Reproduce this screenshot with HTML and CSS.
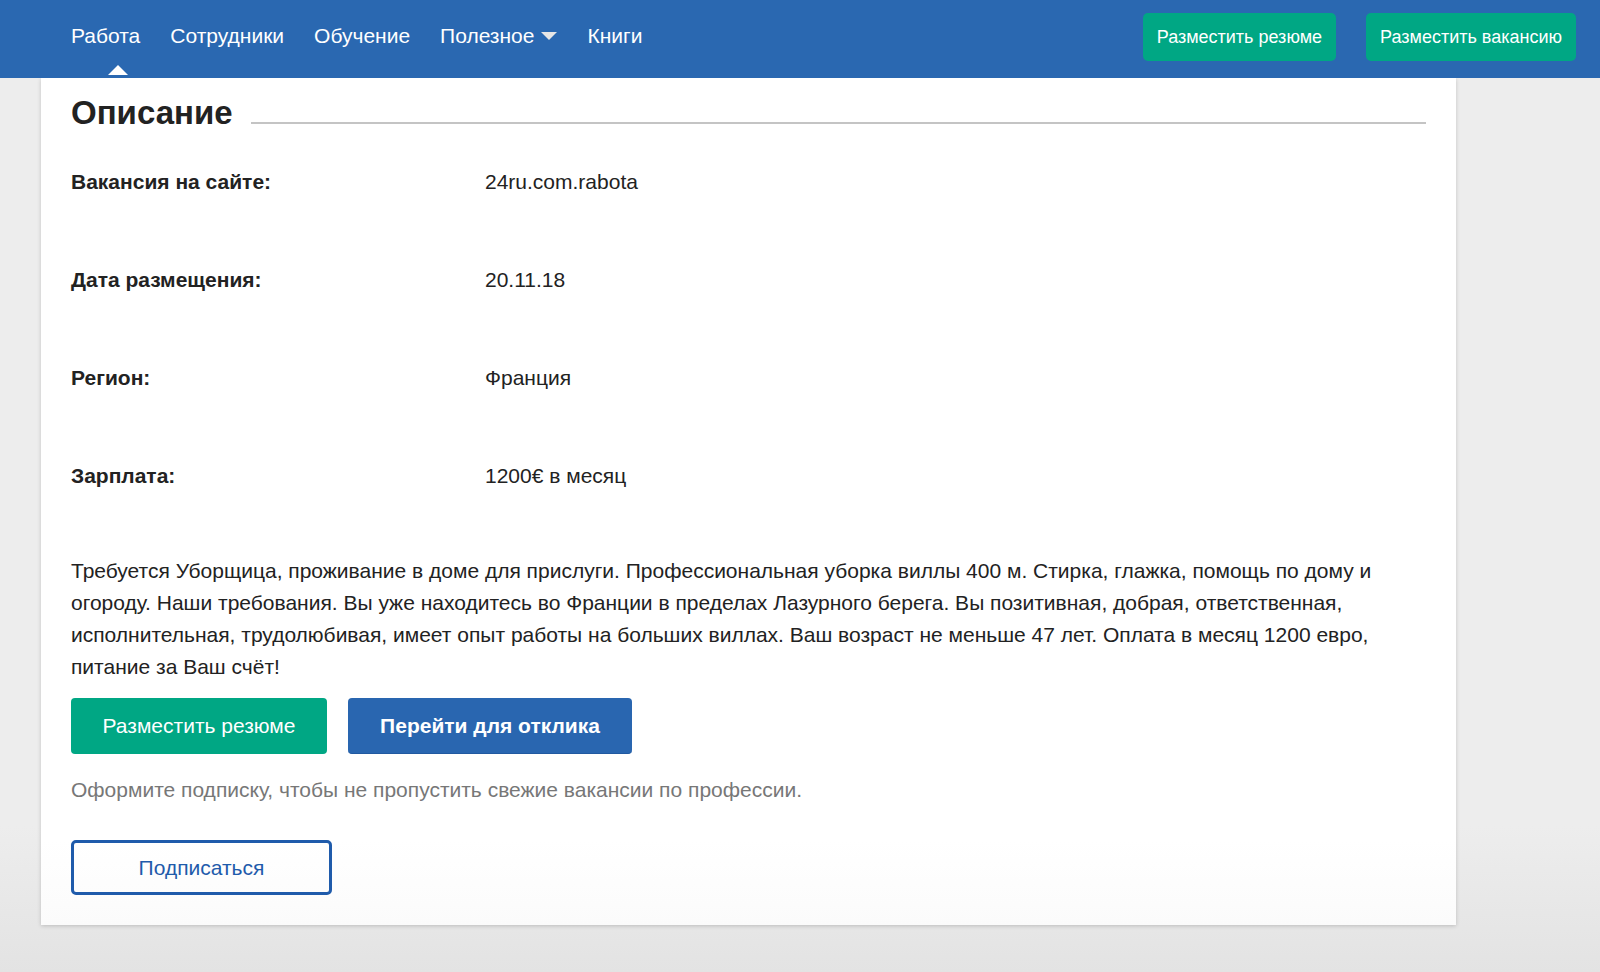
FILE: index.html
```html
<!DOCTYPE html>
<html lang="ru">
<head>
<meta charset="UTF-8">
<meta name="viewport" content="width=device-width, initial-scale=1.0">
<title>Описание вакансии</title>
<link rel="stylesheet" href="styles.css">
</head>
<body>
<header class="topbar">
    <nav class="menu">
        <a class="menu-item active" href="#">Работа</a>
        <a class="menu-item" href="#">Сотрудники</a>
        <a class="menu-item" href="#">Обучение</a>
        <a class="menu-item dropdown" href="#">Полезное <span class="caret"></span></a>
        <a class="menu-item" href="#">Книги</a>
    </nav>
    <div class="top-actions">
        <a class="btn-top" href="#">Разместить резюме</a>
        <a class="btn-top" href="#">Разместить вакансию</a>
    </div>
</header>

<div class="card">
    <div class="card-title">
        <h2>Описание</h2>
        <div class="title-line"></div>
    </div>

    <div class="info">
        <div class="info-label">Вакансия на сайте:</div>
        <div class="info-value">24ru.com.rabota</div>
        <div class="info-label">Дата размещения:</div>
        <div class="info-value">20.11.18</div>
        <div class="info-label">Регион:</div>
        <div class="info-value">Франция</div>
        <div class="info-label">Зарплата:</div>
        <div class="info-value">1200€ в месяц</div>
    </div>

    <p class="description">Требуется Уборщица, проживание в доме для прислуги. Профессиональная уборка виллы 400 м. Стирка, глажка, помощь по дому и огороду. Наши требования. Вы уже находитесь во Франции в пределах Лазурного берега. Вы позитивная, добрая, ответственная, исполнительная, трудолюбивая, имеет опыт работы на больших виллах. Ваш возраст не меньше 47 лет. Оплата в месяц 1200 евро, питание за Ваш счёт!</p>

    <div class="actions">
        <a class="btn btn-green" href="#">Разместить резюме</a>
        <a class="btn btn-blue" href="#">Перейти для отклика</a>
    </div>

    <p class="subscribe-note">Оформите подписку, чтобы не пропустить свежие вакансии по профессии.</p>

    <a class="btn btn-outline" href="#">Подписаться</a>
</div>
</body>
</html>
```

FILE: styles.css
```css
body {
    font-family: "Liberation Sans", Arial, sans-serif;
    margin: 0;
    padding: 0;
    min-height: 972px;
    background: linear-gradient(#ededed 85%, #e3e3e3);
    color: #222;
}

a {
    text-decoration: none;
}

.topbar {
    height: 78px;
    background-color: #2a68b1;
    display: flex;
    align-items: center;
    justify-content: space-between;
    padding: 0 24px 0 71px;
    position: relative;
    z-index: 2;
}

.menu {
    display: flex;
    align-items: center;
    gap: 30px;
    height: 100%;
    margin-top: -6px;
}

.menu-item {
    color: #fff;
    font-size: 21px;
    position: relative;
    display: flex;
    align-items: center;
}

.menu-item.active::after {
    content: "";
    position: absolute;
    left: 50%;
    bottom: -27px;
    margin-left: 2px;
    border-left: 10px solid transparent;
    border-right: 10px solid transparent;
    border-bottom: 10px solid #fff;
}

.caret {
    display: inline-block;
    margin-left: 7px;
    border-left: 8px solid transparent;
    border-right: 8px solid transparent;
    border-top: 8px solid #e6e6e6;
}

.top-actions {
    display: flex;
    gap: 30px;
    margin-top: -4px;
}

.btn-top {
    height: 48px;
    padding: 0 14px;
    display: flex;
    align-items: center;
    background-color: #00a784;
    color: #fff;
    font-size: 18px;
    border-radius: 5px;
}

.card {
    margin-left: 41px;
    width: 1415px;
    box-sizing: border-box;
    padding: 15px 30px 30px 30px;
    background: linear-gradient(#fff 90%, #fbfbfb);
    box-shadow: 0 1px 4px rgba(0, 0, 0, 0.18);
}

.card-title {
    display: flex;
    align-items: flex-end;
}

.card-title h2 {
    margin: 0;
    font-size: 33px;
    line-height: 40px;
    font-weight: bold;
    color: #222;
}

.title-line {
    flex: 1;
    height: 2px;
    background-color: #c4c4c4;
    margin: 0 0 9px 18px;
}

.info {
    display: grid;
    grid-template-columns: 414px 1fr;
    grid-auto-rows: 98px;
    align-items: center;
    font-size: 21px;
}

.info-label {
    font-weight: bold;
}

.description {
    margin: 30px 0 0 0;
    font-size: 21px;
    line-height: 32px;
}

.actions {
    display: flex;
    gap: 21px;
    margin-top: 15px;
}

.btn {
    display: flex;
    align-items: center;
    justify-content: center;
    box-sizing: border-box;
    font-size: 21px;
    border-radius: 4px;
    color: #fff;
}

.btn-green {
    width: 256px;
    height: 56px;
    background-color: #00a784;
}

.btn-blue {
    width: 284px;
    height: 56px;
    background-color: #2966b0;
    font-weight: bold;
    border-bottom: 1px solid #2159a0;
}

.subscribe-note {
    margin: 24px 0 0 0;
    font-size: 21px;
    line-height: 24px;
    color: #777;
}

.btn-outline {
    margin-top: 38px;
    width: 261px;
    height: 55px;
    border: 3px solid #1f5bab;
    border-radius: 5px;
    color: #1f5bab;
    font-size: 21px;
}
```
